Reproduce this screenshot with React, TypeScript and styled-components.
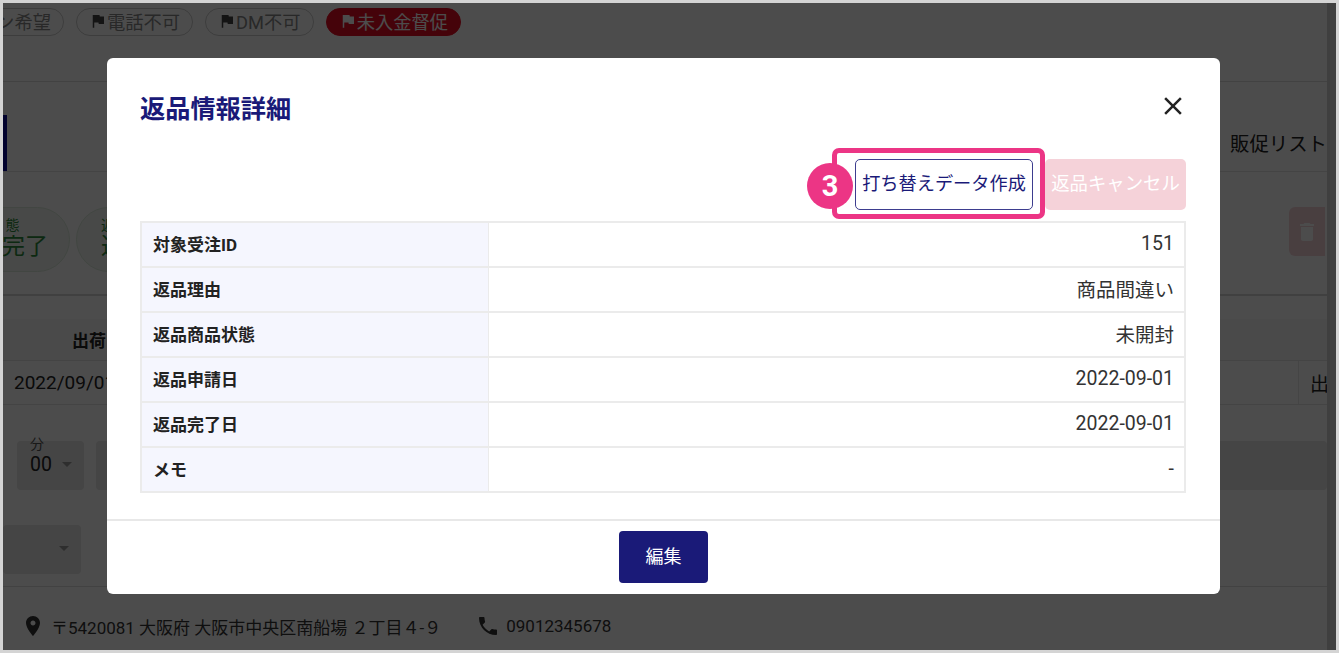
import React from 'react'
import styled, { createGlobalStyle } from 'styled-components'

const FONT = `Roboto, "Noto Sans CJK JP", sans-serif`
const NAVY = '#1a1a78'
const LINE = '#ebebeb'

const GlobalStyle = createGlobalStyle`
  html, body { margin: 0; padding: 0; height: 100%; overflow: hidden; }
  body { font-family: ${FONT}; color: #222; }
  * { box-sizing: border-box; }
`

const Frame = styled.div`
  position: relative;
  width: 1339px;
  height: 653px;
  border: 3px solid #d4d4d4;
  display: flex;
  overflow: hidden;
  background: #fff;
`

const Page = styled.div`
  width: 1324px;
  display: flex;
  flex-direction: column;
  overflow: hidden;
`

const Scrollbar = styled.div`
  flex: 1;
  background: #d2d2d2;
`

const ChipRow = styled.div`
  height: 79px;
  flex: none;
  display: flex;
  gap: 12px;
  padding-top: 5px;
  margin-left: -93px;
  width: 1417px;
  border-bottom: 1px solid #ddd;
`

const Chip = styled.span<{ $alert?: boolean }>`
  height: 28px;
  padding: 0 12px 3px;
  border-radius: 14px;
  display: inline-flex;
  align-items: center;
  font-size: 18.3px;
  white-space: nowrap;
  color: ${p => (p.$alert ? '#fff' : '#888')};
  background: ${p => (p.$alert ? '#e60d24' : 'transparent')};
  border: 1px solid ${p => (p.$alert ? '#e60d24' : '#ccc')};
  svg {
    width: 18px;
    height: 18px;
    fill: ${p => (p.$alert ? '#fff' : '#444')};
  }
`

const TabRow = styled.div`
  height: 90px;
  flex: none;
  display: flex;
  justify-content: space-between;
  align-items: flex-end;
  border-bottom: 1px solid #e4e4e4;
`

const ActiveTab = styled.div`
  width: 4px;
  height: 56px;
  background: #0c0c9a;
`

const TabLabel = styled.span`
  font-size: 19.4px;
  padding-bottom: 14px;
  white-space: nowrap;
`

const StatusRow = styled.div`
  height: 124px;
  flex: none;
  display: flex;
  padding: 35px 2px 0 0;
  gap: 6px;
  border-bottom: 2px solid #d8d8d8;
`

const Pill = styled.div<{ $width: number; $indent: number }>`
  width: ${p => p.$width}px;
  height: 65px;
  padding-left: ${p => p.$indent}px;
  background: #f0f6f0;
  border: 1px solid #dceadc;
  border-radius: 0 33px 33px 0;
  color: #2e8a3c;
  line-height: 1;
  white-space: nowrap;
  overflow: hidden;
  &:first-child { margin-left: -2px; }
  &:nth-child(2) { border-radius: 33px 0 0 33px; }
`

const PillLabel = styled.div`
  font-size: 14px;
  margin-top: 10px;
`

const PillValue = styled.div`
  font-size: 23px;
  margin-top: 3px;
`

const TrashButton = styled.div`
  margin-left: auto;
  width: 36px;
  height: 49px;
  background: #f6d3d8;
  border-radius: 6px 0 0 6px;
  display: flex;
  align-items: center;
  justify-content: center;
  svg { width: 24px; height: 24px; fill: #fff; }
`

const OrderTable = styled.div`
  margin-top: 23px;
  flex: none;
`

const OrderHead = styled.div`
  height: 42px;
  display: grid;
  grid-template-columns: 1295px 1fr;
  background: #f9f9f9;
  border-bottom: 1px solid #e4e4e4;
  font-size: 17px;
  font-weight: 700;
  align-items: center;
  padding-left: 69px;
`

const OrderBody = styled.div`
  height: 44px;
  display: grid;
  grid-template-columns: 1295px 1fr;
  border-bottom: 1px solid #e4e4e4;
  font-size: 19px;
  align-items: center;
`

const OrderCell = styled.span`
  padding-left: 11px;
  white-space: nowrap;
  overflow: hidden;
`

const SideCell = styled.span`
  height: 100%;
  display: flex;
  align-items: center;
  border-left: 1px solid #e8e8e8;
  padding-left: 11px;
  white-space: nowrap;
`

const FormRow = styled.div<{ $top: number }>`
  display: flex;
  gap: 12px;
  margin-top: ${p => p.$top}px;
  flex: none;
`

const Select = styled.div<{ $width?: number; $grow?: boolean; $offset?: number }>`
  height: 49px;
  width: ${p => (p.$width ? `${p.$width}px` : 'auto')};
  flex: ${p => (p.$grow ? 1 : 'none')};
  margin-left: ${p => p.$offset ?? 0}px;
  background: #e6e6e6;
  border-radius: 4px;
  position: relative;
  padding-left: 13px;
  line-height: 1;
`

const SelectLabel = styled.div`
  font-size: 14px;
  color: #555;
  position: relative;
  top: -4px;
`

const SelectValue = styled.div`
  font-size: 19.5px;
  margin-top: 0;
`

const Caret = styled.i`
  position: absolute;
  right: 12px;
  top: 21px;
  border-left: 5px solid transparent;
  border-right: 5px solid transparent;
  border-top: 5px solid #999;
`

const Footer = styled.div`
  margin-top: 12px;
  border-top: 1px solid #ddd;
  flex: 1;
  display: flex;
  align-items: center;
  padding: 15px 0 0 18px;
  font-size: 17px;
  color: #333;
  white-space: nowrap;
  svg { width: 24px; height: 24px; fill: #333; flex: none; }
`

const FooterText = styled.span`
  margin: 0 35px 0 6px;
`

const Overlay = styled.div`
  position: absolute;
  inset: 0;
  background: rgba(0, 0, 0, 0.7);
`

const Modal = styled.div`
  position: absolute;
  left: 104px;
  top: 55px;
  width: 1113px;
  height: 536px;
  background: #fff;
  border-radius: 6px;
  display: flex;
  flex-direction: column;
`

const ModalHeader = styled.div`
  height: 101px;
  flex: none;
  display: flex;
  justify-content: space-between;
  padding: 35px 32px 0 33px;
`

const ModalTitle = styled.h2`
  margin: 0;
  font-size: 25.2px;
  line-height: 34px;
  font-weight: 700;
  color: ${NAVY};
`

const CloseButton = styled.button`
  width: 30px;
  height: 30px;
  padding: 0;
  border: 0;
  background: none;
  margin-top: -2px;
  svg { width: 30px; height: 30px; fill: #222; display: block; }
`

const ActionRow = styled.div`
  display: flex;
  justify-content: flex-end;
  gap: 12px;
  padding-right: 34px;
  flex: none;
`

const OutlineButton = styled.button`
  position: relative;
  width: 178px;
  height: 51px;
  padding: 0 0 5px;
  background: #fff;
  border: 1px solid #3d3d8f;
  border-radius: 5px;
  color: ${NAVY};
  font: 18.2px ${FONT};
  white-space: nowrap;
`

const DisabledButton = styled.button`
  width: 141px;
  height: 51px;
  padding: 0 0 5px;
  background: #f5d2d9;
  border: 0;
  border-radius: 5px;
  color: #fff;
  font: 18.4px ${FONT};
  white-space: nowrap;
`

const Highlight = styled.span`
  position: absolute;
  left: -24px;
  top: -12px;
  width: 213px;
  height: 71px;
  border: 5px solid #ec3585;
  border-radius: 7px;
`

const StepBadge = styled.span`
  position: absolute;
  left: -49px;
  top: 3px;
  width: 46px;
  height: 46px;
  border-radius: 50%;
  background: #ec3585;
  color: #fff;
  font: 700 29px/46px ${FONT};
  text-align: center;
`

const DetailTable = styled.div`
  margin: 11px 34px 0 33px;
  border: 1px solid ${LINE};
  border-width: 2px 2px 0 2px;
  flex: none;
`

const DetailRow = styled.div`
  display: grid;
  grid-template-columns: 347px 1fr;
  height: 45px;
  border-bottom: 2px solid ${LINE};
`

const DetailLabel = styled.div`
  background: #f5f6fe;
  border-right: 1px solid ${LINE};
  display: flex;
  align-items: center;
  padding: 0 0 3px 11px;
  font-size: 17px;
  font-weight: 700;
  color: #222;
`

const DetailValue = styled.div`
  display: flex;
  align-items: center;
  justify-content: flex-end;
  padding: 0 10px 3px 0;
  font-size: 19.5px;
  color: #333;
`

const ModalFooter = styled.div`
  margin-top: 26px;
  flex: 1;
  border-top: 2px solid #e8e8e8;
  display: flex;
  justify-content: center;
  padding-top: 10px;
`

const PrimaryButton = styled.button`
  width: 89px;
  height: 52px;
  padding: 0 0 5px;
  background: ${NAVY};
  border: 0;
  border-radius: 4px;
  color: #fff;
  font: 18px ${FONT};
`

const FLAG = 'M14.4 6L14 4H5v17h2v-7h5.6l.4 2h7V6z'

const Flag = () => (
  <svg viewBox="0 0 24 24"><path d={FLAG} /></svg>
)

const details = [
  { label: '対象受注ID', value: '151' },
  { label: '返品理由', value: '商品間違い' },
  { label: '返品商品状態', value: '未開封' },
  { label: '返品申請日', value: '2022-09-01' },
  { label: '返品完了日', value: '2022-09-01' },
  { label: 'メモ', value: '-' },
]

export default function App() {
  return (
    <Frame>
      <GlobalStyle />
      <Page>
        <ChipRow>
          <Chip>オプション希望</Chip>
          <Chip><Flag />電話不可</Chip>
          <Chip><Flag />DM不可</Chip>
          <Chip $alert><Flag />未入金督促</Chip>
        </ChipRow>
        <TabRow>
          <ActiveTab />
          <TabLabel>販促リスト</TabLabel>
        </TabRow>
        <StatusRow>
          <Pill $width={69} $indent={0}>
            <PillLabel>&nbsp;態</PillLabel>
            <PillValue>完了</PillValue>
          </Pill>
          <Pill $width={60} $indent={24}>
            <PillLabel>返</PillLabel>
            <PillValue>返品</PillValue>
          </Pill>
          <TrashButton>
            <svg viewBox="0 0 24 24"><path d="M6 19c0 1.1.9 2 2 2h8c1.1 0 2-.9 2-2V7H6v12zM19 4h-3.5l-1-1h-5l-1 1H5v2h14V4z" /></svg>
          </TrashButton>
        </StatusRow>
        <OrderTable>
          <OrderHead><span>出荷日</span></OrderHead>
          <OrderBody>
            <OrderCell>2022/09/01</OrderCell>
            <SideCell>出</SideCell>
          </OrderBody>
        </OrderTable>
        <FormRow $top={36}>
          <Select $width={67} $offset={14}>
            <SelectLabel>分</SelectLabel>
            <SelectValue>00</SelectValue>
            <Caret />
          </Select>
          <Select $grow />
        </FormRow>
        <FormRow $top={35}>
          <Select $width={78}><Caret /></Select>
        </FormRow>
        <Footer>
          <svg viewBox="0 0 24 24"><path d="M12 2C8.13 2 5 5.13 5 9c0 5.25 7 13 7 13s7-7.75 7-13c0-3.87-3.13-7-7-7zm0 9.5c-1.38 0-2.5-1.12-2.5-2.5s1.12-2.5 2.5-2.5 2.5 1.12 2.5 2.5-1.12 2.5-2.5 2.5z" /></svg>
          <FooterText>〒5420081 大阪府 大阪市中央区南船場 ２丁目４-９</FooterText>
          <svg viewBox="0 0 24 24"><path d="M6.62 10.79c1.44 2.83 3.76 5.14 6.59 6.59l2.2-2.2c.27-.27.67-.36 1.02-.24 1.12.37 2.33.57 3.57.57.55 0 1 .45 1 1V20c0 .55-.45 1-1 1-9.39 0-17-7.61-17-17 0-.55.45-1 1-1h3.5c.55 0 1 .45 1 1 0 1.25.2 2.45.57 3.57.11.35.03.74-.25 1.02l-2.2 2.2z" /></svg>
          <FooterText>09012345678</FooterText>
        </Footer>
      </Page>
      <Scrollbar />
      <Overlay />
      <Modal>
        <ModalHeader>
          <ModalTitle>返品情報詳細</ModalTitle>
          <CloseButton aria-label="close">
            <svg viewBox="0 0 24 24"><path d="M19 6.41L17.59 5 12 10.59 6.41 5 5 6.41 10.59 12 5 17.59 6.41 19 12 13.41 17.59 19 19 17.59 13.41 12z" /></svg>
          </CloseButton>
        </ModalHeader>
        <ActionRow>
          <OutlineButton>
            打ち替えデータ作成
            <Highlight />
            <StepBadge>3</StepBadge>
          </OutlineButton>
          <DisabledButton>返品キャンセル</DisabledButton>
        </ActionRow>
        <DetailTable>
          {details.map(row => (
            <DetailRow key={row.label}>
              <DetailLabel>{row.label}</DetailLabel>
              <DetailValue>{row.value}</DetailValue>
            </DetailRow>
          ))}
        </DetailTable>
        <ModalFooter>
          <PrimaryButton>編集</PrimaryButton>
        </ModalFooter>
      </Modal>
    </Frame>
  )
}
